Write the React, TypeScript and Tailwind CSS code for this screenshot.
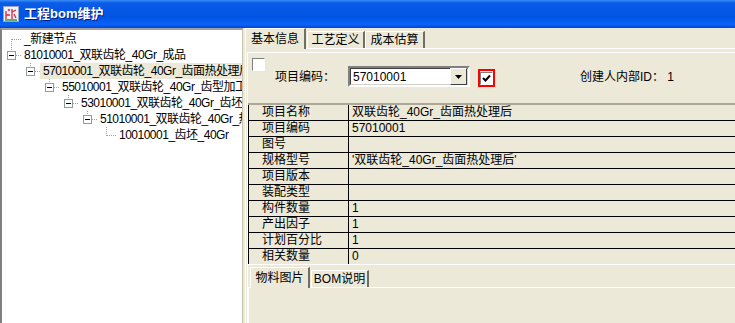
import React from "react";

type Row = { level: number; text: string; kind: "first" | "box" | "leaf"; selected?: boolean };

const rows: Row[] = [
  { level: 0, text: "_新建节点", kind: "first" },
  { level: 0, text: "81010001_双联齿轮_40Gr_成品", kind: "box" },
  { level: 1, text: "57010001_双联齿轮_40Gr_齿面热处理后", kind: "box", selected: true },
  { level: 2, text: "55010001_双联齿轮_40Gr_齿型加工", kind: "box" },
  { level: 3, text: "53010001_双联齿轮_40Gr_齿坯", kind: "box" },
  { level: 4, text: "51010001_双联齿轮_40Gr_热处理", kind: "box" },
  { level: 5, text: "10010001_齿坯_40Gr", kind: "leaf" },
];

const props: [string, string][] = [
  ["项目名称", "双联齿轮_40Gr_齿面热处理后"],
  ["项目编码", "57010001"],
  ["图号", ""],
  ["规格型号", "'双联齿轮_40Gr_齿面热处理后'"],
  ["项目版本", ""],
  ["装配类型", ""],
  ["构件数量", "1"],
  ["产出因子", "1"],
  ["计划百分比", "1"],
  ["相关数量", "0"],
];

function Connector({ kind }: { kind: Row["kind"] }) {
  const dot = { stroke: "#a0a0a0", strokeWidth: 1, strokeDasharray: "1 1" };
  return (
    <svg width="19" height="16" className="shrink-0" shapeRendering="crispEdges">
      {kind === "first" && (
        <>
          <line x1="9.5" y1="8" x2="9.5" y2="16" {...dot} />
          <line x1="10" y1="8.5" x2="19" y2="8.5" {...dot} />
        </>
      )}
      {kind === "leaf" && (
        <>
          <line x1="9.5" y1="0" x2="9.5" y2="9" {...dot} />
          <line x1="10" y1="8.5" x2="19" y2="8.5" {...dot} />
        </>
      )}
      {kind === "box" && (
        <>
          <line x1="9.5" y1="0" x2="9.5" y2="4" {...dot} />
          <rect x="5.5" y="4.5" width="8" height="8" fill="#fff" stroke="#919b9c" />
          <line x1="7" y1="8.5" x2="12" y2="8.5" stroke="#000" />
          <line x1="14" y1="8.5" x2="19" y2="8.5" {...dot} />
        </>
      )}
    </svg>
  );
}

function AppIcon() {
  return (
    <svg width="16" height="16" viewBox="0 0 16 16" className="shrink-0">
      <rect x="0.5" y="0.5" width="15" height="15" fill="#eef0f6" stroke="#9aa6c2" />
      <path d="M3 13 L3 5 M3 9 L7 9 M9 3 L9 13 M9 6 L13 4 M11 8 L13 12" stroke="#d8283c" strokeWidth="1.3" fill="none" />
      <path d="M2 14 L14 14" stroke="#2e9a4a" strokeWidth="1.5" />
      <circle cx="6" cy="4" r="1.3" fill="#e05080" />
    </svg>
  );
}

function Tab({ label, active, w }: { label: string; active?: boolean; w: string }) {
  return (
    <div
      className={
        active
          ? `relative z-10 -mb-px flex h-[21px] items-center justify-center border-l border-t border-r-2 border-l-white border-t-white border-r-[#716f64] bg-[#ece9d8] ${w}`
          : `flex h-[17px] items-center justify-center border-l border-t border-r-2 border-l-white border-t-white border-r-[#716f64] bg-[#ece9d8] ${w}`
      }
    >
      <span className="leading-[14px]">{label}</span>
    </div>
  );
}

export default function App() {
  return (
    <div className="flex h-[323px] w-[735px] flex-col overflow-hidden bg-[#ece9d8] font-[family-name:'Liberation_Sans','Noto_Sans_CJK_SC',sans-serif] text-[12px] text-black">
      {/* title bar */}
      <div className="flex h-[28px] shrink-0 items-center gap-[5px] bg-[linear-gradient(to_bottom,#3d8ef7_0%,#0a5ce8_10%,#0054e3_60%,#0a62f5_88%,#0044d6_100%)] pl-[3px]">
        <AppIcon />
        <span className="text-[13px] font-bold text-white [text-shadow:1px_1px_#0a1883]">工程bom维护</span>
      </div>

      <div className="flex min-h-0 flex-1">
        {/* tree */}
        <div className="w-[243px] shrink-0 overflow-hidden border-l-2 border-t-2 border-r border-l-[#808080] border-t-[#a0a0a0] border-r-[#c8c4b4] bg-white pt-[1px] tracking-[-0.5px]">
          {rows.map((r, i) => (
            <div
              key={i}
              className="flex h-[16px] items-center whitespace-nowrap"
              style={{ paddingLeft: r.level * 19 }}
            >
              <Connector kind={r.kind} />
              <span
                className={
                  r.selected
                    ? "h-[16px] bg-[#ece9d8] pl-[3px] pr-[2px] leading-[16px]"
                    : "h-[16px] pl-[3px] leading-[16px]"
                }
              >
                {r.text}
              </span>
            </div>
          ))}
        </div>

        {/* right side */}
        <div className="flex min-w-0 flex-1 flex-col pl-[2px]">
          <div className="flex h-[20px] shrink-0 items-end">
            <Tab label="基本信息" active w="w-[61px]" />
            <div className="w-[1px]" />
            <Tab label="工艺定义" w="w-[58px]" />
            <Tab label="成本估算" w="w-[60px]" />
          </div>
          <div className="flex min-h-0 flex-1 flex-col border-l border-t border-white pl-[1px] pt-[3px]">
            <div className="flex min-h-0 flex-1 flex-col border-l border-t border-white">
              {/* header */}
              <div className="flex h-[50px] shrink-0">
                <div className="ml-[4px] mt-[5px] h-[13px] w-[13px] border border-b-white border-l-[#808080] border-r-white border-t-[#808080] bg-white" />
                <div className="ml-[10px] mt-[13px] flex h-[21px] items-center">
                  <span className="w-[73px]">项目编码：</span>
                  <div className="flex h-[21px] w-[122px] border-2 border-b-white border-l-[#808080] border-r-white border-t-[#808080] bg-white">
                    <div className="flex flex-1 items-center border border-b-[#d4d0c8] border-l-[#404040] border-r-[#d4d0c8] border-t-[#404040] pl-[2px]">
                      <span className="flex-1">57010001</span>
                      <div className="flex h-[17px] w-[17px] items-center justify-center border border-b-[#404040] border-l-white border-r-[#404040] border-t-white bg-[#ece9d8]">
                        <svg width="7" height="4" viewBox="0 0 7 4">
                          <path d="M0 0 H7 L3.5 4 Z" fill="#000" />
                        </svg>
                      </div>
                    </div>
                  </div>
                  <div className="ml-[8px] mt-[3px] flex h-[18px] w-[17px] items-center justify-center border-2 border-[#ff0000]">
                    <div className="flex h-[13px] w-[13px] items-center justify-center border border-b-white border-l-[#808080] border-r-white border-t-[#808080] bg-white">
                      <svg width="9" height="8" viewBox="0 0 9 8">
                        <path d="M1 4 L3.5 6.5 L8 1.5" stroke="#000" strokeWidth="2" fill="none" />
                      </svg>
                    </div>
                  </div>
                  <span className="ml-[85px] whitespace-nowrap">创建人内部ID： 1</span>
                </div>
              </div>

              {/* property grid */}
              <div className="shrink-0 border-t-2 border-[#aca899]">
                {props.map(([k, v], i) => (
                  <div
                    key={k}
                    className={
                      i === props.length - 1
                        ? "flex h-[16px] border-b border-white"
                        : "flex h-[16px] border-b border-black"
                    }
                  >
                    <div className="w-[101px] shrink-0 border-l border-r border-black pl-[13px] leading-[15px]">{k}</div>
                    <div className="whitespace-nowrap pl-[3px] leading-[15px]">{v}</div>
                  </div>
                ))}
              </div>

              {/* bottom tabs */}
              <div className="mt-[1px] flex h-[21px] shrink-0 items-end pl-[2px]">
                <Tab label="物料图片" active w="w-[60px]" />
                <div className="w-[1px]" />
                <Tab label="BOM说明" w="w-[58px]" />
              </div>
              <div className="flex-1 border-l border-t border-white" />
            </div>
          </div>
        </div>
      </div>
    </div>
  );
}
